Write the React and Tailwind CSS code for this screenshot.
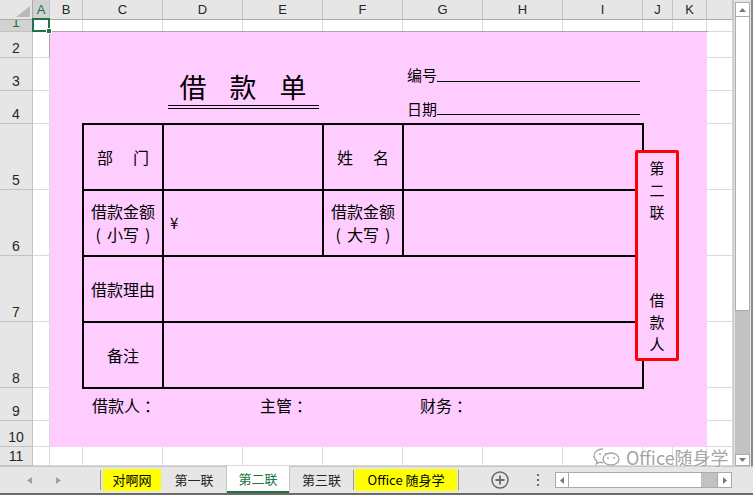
import React from 'react';

const CJK = "font-['Noto_Sans_CJK_SC','Noto_Sans_CJK_JP',sans-serif]";
const HDR = "bg-[#e6e6e6] border-r border-b border-[#c3c3c3] text-[#262626] font-['Liberation_Sans',sans-serif] overflow-hidden leading-none";
const HDR_SEL = "bg-[#d2d2d2] border-r border-b border-[#c3c3c3] text-[#217346] font-['Liberation_Sans',sans-serif] overflow-hidden leading-none";
const CELL = "bg-white border-r border-b border-[#dadada]";
const TC = "bg-[#ffccff] flex items-center justify-center text-[16px] leading-[23px] text-black";

const letters = ['A', 'B', 'C', 'D', 'E', 'F', 'G', 'H', 'I', 'J', 'K', ''];

function RowHeader({ n, selected }) {
  return (
    <div className={`${selected ? HDR_SEL : HDR} flex items-end justify-center pb-[2px] text-[14px]`}>
      {n}
    </div>
  );
}

function Paren({ children }) {
  return (
    <span className="flex items-center">
      <span>(</span>
      <span className="mx-[6px]">{children}</span>
      <span>)</span>
    </span>
  );
}

function Label({ text }) {
  return (
    <span className="flex">
      <span>{text}</span>
      <span className="ml-[4px]">：</span>
    </span>
  );
}

function Sheet() {
  const middleRows = [3, 4, 5, 6, 7, 8, 9, 10];
  return (
    <div className="grid grid-cols-[33px_17px_33px_80px_80px_80px_80px_80px_80px_80px_30px_34px_26px] grid-rows-[20px_12px_26px_33px_33px_66px_66px_66px_66px_33px_26px_19px] w-[733px] h-[466px]">
      <div className="bg-[#e6e6e6] border-r border-b border-[#ababab] flex items-end justify-end pr-[2px] pb-[2px]">
        <svg width="14" height="11" viewBox="0 0 14 11">
          <polygon points="14,0 14,11 0,11" fill="#b9b9b9" />
        </svg>
      </div>
      {letters.map((l, i) => (
        <div
          key={'h' + i}
          className={`${i === 0 ? HDR_SEL : HDR} flex items-center justify-center text-[13px] border-b-[#ababab]`}
        >
          {l}
        </div>
      ))}

      <RowHeader n="1" selected />
      <div className={`${CELL} relative`}>
        <div className="absolute -left-[1px] -top-[2px] -right-[1px] -bottom-[1px] border-2 border-[#217346]" />
        <div className="absolute -right-[3px] -bottom-[3px] w-[6px] h-[6px] bg-[#217346] border border-white" />
      </div>
      {letters.slice(1).map((l, i) => (
        <div key={'r1' + i} className={CELL} />
      ))}

      <RowHeader n="2" />
      <div className={CELL} />
      <Form />
      <div className={CELL} />

      {middleRows.map((r) => (
        <React.Fragment key={'r' + r}>
          <RowHeader n={String(r)} />
          <div className={CELL} />
          <div className={CELL} />
        </React.Fragment>
      ))}

      <RowHeader n="11" />
      {letters.map((l, i) => (
        <div key={'r11' + i} className={CELL} />
      ))}
    </div>
  );
}

function Form() {
  return (
    <div className={`col-span-10 row-span-9 bg-[#ffccff] outline outline-[#a6a6a6] grid grid-cols-[33px_80px_80px_80px_80px_80px_80px_80px_30px_34px] grid-rows-[26px_33px_33px_66px_66px_66px_66px_33px_26px] ${CJK} text-black`}>
      <div className="col-start-3 col-span-2 row-start-2 row-span-2 flex flex-col items-center pt-[15px]">
        <div className="flex gap-[23px] text-[27px] leading-[27px]">
          <span>借</span>
          <span>款</span>
          <span>单</span>
        </div>
        <div className="mt-[5px] w-[151px] h-[4px] border-y border-black" />
      </div>

      <div className="col-start-6 col-span-3 row-start-2 row-span-2 flex flex-col">
        <div className="h-[33px] flex items-end pl-[4px] pb-[9px]">
          <span className="text-[15px] leading-[15px]">编号</span>
          <div className="w-[203px] border-b border-black" />
        </div>
        <div className="h-[33px] flex items-end pl-[4px] pb-[8px]">
          <span className="text-[15px] leading-[15px]">日期</span>
          <div className="w-[203px] border-b border-black mb-[1px]" />
        </div>
      </div>

      <div className="col-start-2 col-span-7 row-start-4 row-span-4 -ml-px -mt-px w-[562px] h-[266px] grid grid-cols-[78px_158px_78px_238px] grid-rows-[64px_64px_64px_64px] gap-[2px] p-[2px] bg-black">
        <div className={TC}>
          <span>部</span>
          <span className="ml-[20px]">门</span>
        </div>
        <div className={TC} />
        <div className={TC}>
          <span>姓</span>
          <span className="ml-[20px]">名</span>
        </div>
        <div className={TC} />

        <div className={`${TC} flex-col`}>
          <span>借款金额</span>
          <Paren>小写</Paren>
        </div>
        <div className="bg-[#ffccff] flex items-center pl-[6px] text-[15px]">¥</div>
        <div className={`${TC} flex-col`}>
          <span>借款金额</span>
          <Paren>大写</Paren>
        </div>
        <div className={TC} />

        <div className={TC}>借款理由</div>
        <div className={`${TC} col-span-3`} />

        <div className={TC}>备注</div>
        <div className={`${TC} col-span-3`} />
      </div>

      <div className="relative z-10 col-start-9 row-start-4 row-span-4 self-start -ml-[8px] mt-[26px] w-[44px] h-[211px] bg-[#ffccff] border-[3px] border-[#ff0000] rounded-[2px] flex flex-col items-center justify-center text-[15px]">
        {['第', '二', '联', '', '', '', '借', '款', '人'].map((c, i) => (
          <div key={i} className="h-[22px] leading-[22px]">{c}</div>
        ))}
      </div>

      <div className="col-start-2 col-span-2 row-start-8 flex items-center pl-[9px] text-[16px]"><Label text="借款人" /></div>
      <div className="col-start-4 col-span-2 row-start-8 flex items-center pl-[17px] text-[16px]"><Label text="主管" /></div>
      <div className="col-start-6 col-span-2 row-start-8 flex items-center pl-[17px] text-[16px]"><Label text="财务" /></div>
    </div>
  );
}

function VScroll() {
  return (
    <div className="w-[20px] h-[466px] bg-[#e6e6e6] border-l border-[#c6c6c6] border-r-[2px] border-r-[#8a8a8a] flex flex-col pt-[2px] pl-px">
      <div className="w-[15px] h-[15px] bg-white border border-[#ababab] flex items-center justify-center">
        <svg width="7" height="4" viewBox="0 0 7 4"><polygon points="0,4 7,4 3.5,0" fill="#7a7a7a" /></svg>
      </div>
      <div className="w-[15px] h-[294px] bg-white border-x border-b border-[#ababab]" />
      <div className="w-[15px] flex-1 bg-[#c2c2c2]" />
      <div className="w-[15px] h-[12px] bg-white border border-[#ababab] flex items-center justify-center">
        <svg width="7" height="4" viewBox="0 0 7 4"><polygon points="0,0 7,0 3.5,4" fill="#7a7a7a" /></svg>
      </div>
    </div>
  );
}

function TabBar() {
  return (
    <div className={`h-[29px] flex items-stretch bg-[#e6e6e6] border-t border-[#c6c6c6] border-b-2 border-b-[#6b6b6b] ${CJK} text-[13px] text-[#262626]`}>
      <div className="w-[100px] flex items-center">
        <svg className="ml-[27px]" width="5" height="7" viewBox="0 0 5 7"><polygon points="5,0 5,7 0,3.5" fill="#a0a0a0" /></svg>
        <svg className="ml-[24px]" width="5" height="7" viewBox="0 0 5 7"><polygon points="0,0 0,7 5,3.5" fill="#a0a0a0" /></svg>
      </div>
      <div className="w-px self-center h-[20px] bg-[#9d9d9d]" />
      <div className="w-[61px] flex py-[2px] pl-[2px] pr-px">
        <div className="flex-1 bg-[#ffff00] flex items-center justify-center text-black">对啊网</div>
      </div>
      <div className="w-[64px] flex items-center justify-center">第一联</div>
      <div className="w-[64px] -mt-px bg-white border-x border-[#c6c6c6] flex flex-col">
        <div className="flex-1 flex items-center justify-center text-[#217346]">第二联</div>
        <div className="h-[2px] bg-[#217346]" />
      </div>
      <div className="w-[63px] flex items-center justify-center">第三联</div>
      <div className="w-px self-center h-[20px] bg-[#9d9d9d]" />
      <div className="w-[104px] flex py-[2px] px-px">
        <div className="flex-1 bg-[#ffff00] flex items-center justify-center text-black">Office 随身学</div>
      </div>
      <div className="w-px self-center h-[20px] bg-[#9d9d9d]" />
      <div className="ml-[32px] flex items-center">
        <svg width="18" height="18" viewBox="0 0 18 18">
          <circle cx="9" cy="9" r="8" fill="none" stroke="#6a6a6a" strokeWidth="1.5" />
          <path d="M9 4.5v9M4.5 9h9" stroke="#6a6a6a" strokeWidth="1.8" />
        </svg>
      </div>
      <div className="ml-[28px] flex flex-col justify-center gap-[3px]">
        <div className="w-[2px] h-[2px] bg-[#666]" />
        <div className="w-[2px] h-[2px] bg-[#666]" />
        <div className="w-[2px] h-[2px] bg-[#666]" />
      </div>
      <div className="ml-[16px] self-center w-[177px] h-[16px] flex border border-[#ababab] bg-[#c2c2c2]">
        <div className="w-[13px] bg-white border-r border-[#ababab] flex items-center justify-center">
          <svg width="4" height="7" viewBox="0 0 4 7"><polygon points="4,0 4,7 0,3.5" fill="#7a7a7a" /></svg>
        </div>
        <div className="w-[132px] bg-white" />
        <div className="flex-1" />
        <div className="w-[14px] bg-white border-l border-[#ababab] flex items-center justify-center">
          <svg width="4" height="7" viewBox="0 0 4 7"><polygon points="0,0 0,7 4,3.5" fill="#7a7a7a" /></svg>
        </div>
      </div>
    </div>
  );
}

export default function App() {
  return (
    <div className="w-[753px] h-[495px] overflow-hidden bg-white flex flex-col">
      <div className="relative flex h-[466px]">
        <Sheet />
        <VScroll />
        <div className={`absolute left-[592px] top-[448px] flex items-center gap-[4px] ${CJK} text-[18px] leading-[18px] text-[#a5a5a5] [text-shadow:0_0_2px_#ffffff,0_0_2px_#ffffff]`}>
          <svg width="30" height="18" viewBox="0 0 30 18">
            <path d="M11 1C5.8 1 2 4.3 2 8c0 2.1 1.2 3.9 3 5.1L4.3 16l3.3-1.8c1.1.3 2.2.5 3.4.5" fill="white" stroke="#a5a5a5" strokeWidth="1.3" />
            <ellipse cx="19" cy="11" rx="8" ry="6" fill="white" stroke="#a5a5a5" strokeWidth="1.3" />
            <circle cx="8" cy="6" r="1" fill="#a5a5a5" />
            <circle cx="14" cy="6" r="1" fill="#a5a5a5" />
            <circle cx="16" cy="10" r="0.9" fill="#a5a5a5" />
            <circle cx="22" cy="10" r="0.9" fill="#a5a5a5" />
          </svg>
          <span>Office随身学</span>
        </div>
      </div>
      <TabBar />
    </div>
  );
}
